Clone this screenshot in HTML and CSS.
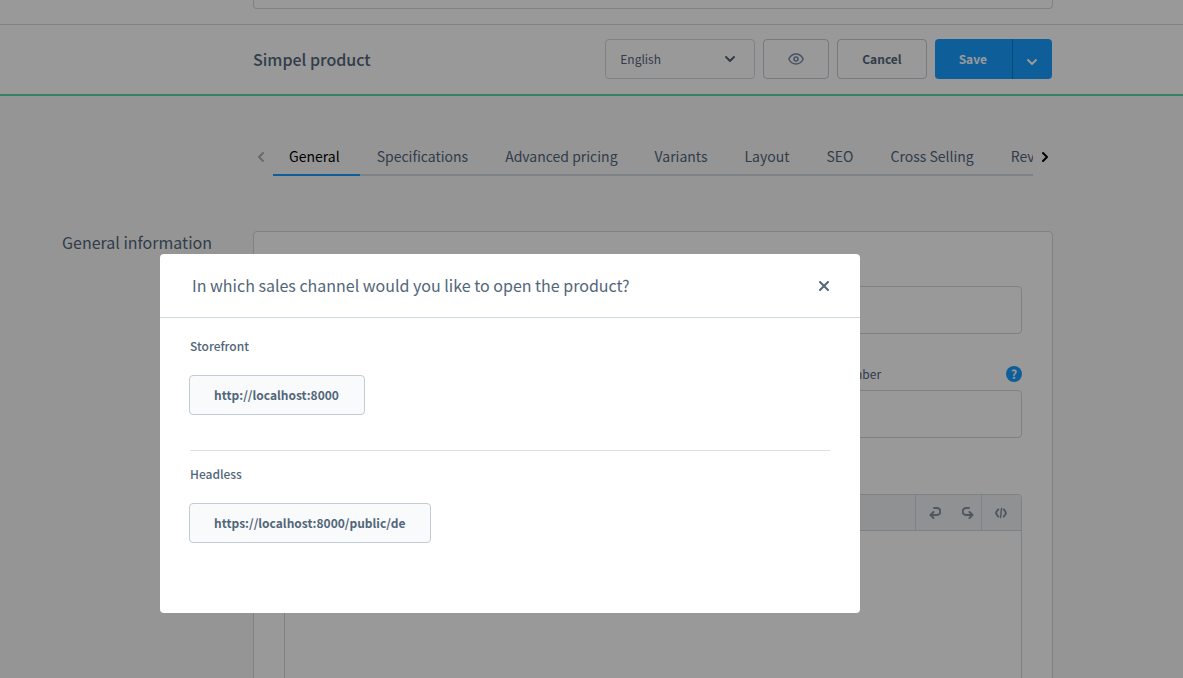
FILE: index.html
```html
<!DOCTYPE html>
<html lang="en">
<head>
<meta charset="utf-8">
<title>Simpel product</title>
<link rel="stylesheet" href="styles.css">
</head>
<body>
<div class="page">
  <div class="search-bar"><div class="search-box"></div></div>
  <header class="toolbar">
    <h1 class="toolbar-title">Simpel product</h1>
    <div class="actions">
      <div class="select-wrap">
        <select class="language" aria-label="Language"><option>English</option></select>
        <svg class="select-arrow" width="12" height="8" viewBox="0 0 12 8"><path d="M2 2l4 4 4-4"/></svg>
      </div>
      <button class="button button-icon" type="button" aria-label="Preview">
        <svg class="eye" width="16" height="12" viewBox="0 0 16 12"><path d="M.8 6C2.400 2.800 5 1 8 1s5.600 1.800 7.200 5C13.600 9.200 11 11 8 11S2.400 9.200.8 6z"/><circle cx="8" cy="6" r="2"/></svg>
      </button>
      <button class="button" type="button">Cancel</button>
      <div class="save-group">
        <button class="save" type="button">Save</button>
        <button class="save-more" type="button" aria-label="More save options"><svg width="12" height="8" viewBox="0 0 12 8"><path d="M2 2l4 4 4-4"/></svg></button>
      </div>
    </div>
  </header>
  <main class="content">
    <div class="tab-bar">
      <button class="tab-arrow tab-arrow-off" type="button" aria-label="Previous tabs"><svg width="8" height="12" viewBox="0 0 8 12"><path d="M6 2L2 6l4 4"/></svg></button>
      <nav class="tabs">
        <a class="tab tab-active" href="#general">General</a>
        <a class="tab" href="#specifications">Specifications</a>
        <a class="tab" href="#pricing">Advanced pricing</a>
        <a class="tab" href="#variants">Variants</a>
        <a class="tab" href="#layout">Layout</a>
        <a class="tab" href="#seo">SEO</a>
        <a class="tab" href="#cross-selling">Cross Selling</a>
        <a class="tab" href="#reviews">Reviews</a>
      </nav>
      <button class="tab-arrow tab-arrow-next" type="button" aria-label="Next tabs"><svg width="8" height="12" viewBox="0 0 8 12"><path d="M2 2l4 4-4 4"/></svg></button>
    </div>
    <section class="section">
      <h2 class="section-title">General information</h2>
      <div class="card">
        <input class="input" type="text" aria-label="Name">
        <div class="field-row">
          <input class="input" type="text" aria-label="Manufacturer">
          <div class="field">
            <div class="label-row">
              <label class="label" for="number">Product number</label>
              <button class="help" type="button" aria-label="Help">?</button>
            </div>
            <input class="input" id="number" type="text">
          </div>
        </div>
        <div class="editor">
          <div class="editor-bar">
            <div class="editor-group">
              <button class="editor-button" type="button" aria-label="Undo"><svg width="12" height="12" viewBox="0 0 12 12"><path d="M5 1h2.800a3.200 3.200 0 0 1 0 7H1.800M4.500 5L1.500 8l3 3"/></svg></button>
              <button class="editor-button" type="button" aria-label="Redo"><svg width="12" height="12" viewBox="0 0 12 12"><path d="M7 1H4.200a3.200 3.200 0 0 0 0 7h6M7.500 5l3 3-3 3"/></svg></button>
            </div>
            <div class="editor-group editor-group-code">
              <button class="editor-button" type="button" aria-label="Source code"><svg width="12" height="12" viewBox="0 0 12 12"><path d="M3.200 2.500Q1.800 3.800 1 6q.8 2.200 2.200 3.500M8.800 2.500Q10.200 3.800 11 6q-.8 2.200-2.200 3.500"/><path class="slash" d="M6.500 1.500l-1 9"/></svg></button>
            </div>
          </div>
          <textarea class="editor-text" aria-label="Description"></textarea>
        </div>
      </div>
    </section>
  </main>
</div>
<div class="backdrop">
  <div class="modal" role="dialog" aria-modal="true" aria-labelledby="modal-title">
    <header class="modal-head">
      <h2 class="modal-title" id="modal-title">In which sales channel would you like to open the product?</h2>
      <button class="close" type="button" aria-label="Close"><svg width="12" height="12" viewBox="0 0 12 12"><path d="M2 2l8 8M10 2l-8 8"/></svg></button>
    </header>
    <div class="modal-body">
      <section class="channel">
        <h3 class="channel-title">Storefront</h3>
        <button class="button button-channel" type="button">http://localhost:8000</button>
      </section>
      <section class="channel">
        <h3 class="channel-title">Headless</h3>
        <button class="button button-channel" type="button">https://localhost:8000/public/de</button>
      </section>
    </div>
  </div>
</div>
</body>
</html>
```

FILE: styles.css
```css
* { box-sizing: border-box; }
body {
  margin: 0;
  height: 100vh;
  overflow: hidden;
  background: #f9f9f9;
  color: #52667a;
  font: 400 12px/20px "Noto Sans CJK SC", "Noto Sans", sans-serif;
}
button, input, select, textarea { font: inherit; color: inherit; margin: 0; }
button { display: flex; align-items: center; justify-content: center; }
h1, h2, h3 { margin: 0; }
svg { flex: none; fill: none; stroke: currentColor; stroke-width: 2; stroke-linecap: round; stroke-linejoin: round; }
.page { height: 100vh; overflow: hidden; }

.search-bar { padding: 0 130px 15px 253px; background: #fff; border-bottom: 1px solid #d1d9e0; }
.search-box { height: 9px; border: 1px solid #d1d9e0; border-top: 0; border-radius: 0 0 4px 4px; }
.toolbar {
  display: flex;
  align-items: center;
  justify-content: space-between;
  padding: 14px 131px 15px 253px;
  background: #fff;
  border-bottom: 2px solid #57d9a3;
}
.toolbar-title { font-size: 16px; font-weight: 500; line-height: 24px; }
.actions { display: flex; gap: 8px; }
.select-wrap { position: relative; width: 150px; }
.language {
  appearance: none;
  width: 100%;
  height: 40px;
  padding: 0 14px;
  border: 1px solid #d1d9e0;
  border-radius: 4px;
  background: #fff;
}
.select-arrow { position: absolute; right: 19px; top: 16px; pointer-events: none; }
.button {
  height: 40px;
  padding: 0 24px;
  border: 1px solid #c2ccd6;
  border-radius: 4px;
  background: #fff;
  font-weight: 700;
}
.button-icon { width: 66px; }
.eye { stroke: #758ca3; stroke-width: 1.500; }
.save-group { display: flex; color: #fff; }
.save, .save-more { height: 40px; border: 0; background: #189eff; }
.save { padding: 0 25px 0 24px; border-radius: 4px 0 0 4px; font-weight: 700; }
.save-more { width: 40px; padding: 5px 2px 0 0; border-left: 1px solid #0b7cce; border-radius: 0 4px 4px 0; }

.content { padding: 41px 130px 0 62px; }
.tab-bar { display: flex; padding-left: 191px; }
.tab-arrow { width: 20px; height: 39px; padding: 0; border: 0; background: none; color: #000; }
.tab-arrow-off { padding-right: 4px; color: #b0b0b0; }
.tab-arrow-next { padding-left: 4px; }
.tabs { display: flex; flex: 1; gap: 1px; min-width: 0; overflow: hidden; box-shadow: inset 0 -2px #d1d9e0; }
.tab { flex: none; height: 39px; padding: 8px 20px 0 16px; font-size: 14px; line-height: 22px; color: inherit; text-decoration: none; }
.tab-active { color: #000; border-bottom: 2px solid #189eff; }

.section { display: grid; grid-template-columns: 191px minmax(0, 1fr); margin-top: 55px; }
.section-title { font-size: 16px; font-weight: 400; line-height: 22px; }
.card {
  display: flex;
  flex-direction: column;
  padding: 54px 30px 30px;
  background: #fff;
  border: 1px solid #d1d9e0;
  border-radius: 4px;
}
.label { display: block; height: 30px; padding-top: 4px; }
.label-row { display: flex; justify-content: space-between; }
.field-row { display: grid; grid-template-columns: 2fr 1fr; align-items: end; gap: 40px; margin: 26px 0 56px; }
.input { display: block; width: 100%; height: 48px; padding: 0 16px; border: 1px solid #d1d9e0; border-radius: 4px; background: #fff; }
.help { width: 16px; height: 16px; margin-top: 6px; padding: 0; border: 0; border-radius: 50%; background: #189eff; color: #fff; font-weight: 700; line-height: 16px; }
.editor { border: 1px solid #d1d9e0; border-radius: 4px; overflow: hidden; }
.editor-bar { display: flex; justify-content: flex-end; height: 36px; background: #f0f2f5; border-bottom: 1px solid #d1d9e0; color: #8292a3; }
.editor-group { display: flex; gap: 6px; padding-left: 5px; border-left: 1px solid #d1d9e0; }
.editor-button { width: 27px; padding: 0; border: 0; background: none; }
.editor-group-code { padding: 0 7px 0 5px; }
.slash { stroke-width: 1.500; }
.editor-text { display: block; width: 100%; height: 300px; padding: 16px; border: 0; background: #fff; resize: none; }

.backdrop { position: fixed; inset: 0; padding: 254px 323px 0 160px; background: rgba(0, 0, 0, .4); }
.modal { min-height: 359px; background: #fff; border-radius: 4px; }
.modal-head { display: flex; align-items: center; justify-content: space-between; height: 64px; padding: 0 30px 0 32px; border-bottom: 1px solid #d1d9e0; }
.modal-title { padding-bottom: 2px; font-size: 16px; font-weight: 400; line-height: 24px; }
.close { width: 12px; height: 12px; padding: 0; border: 0; background: none; }
.modal-body { padding: 0 30px; }
.channel { padding: 18px 0 35px; }
.channel + .channel { padding-top: 13px; border-top: 1px solid #dcdfe3; }
.channel-title { margin-bottom: 19px; font-size: 12px; font-weight: 500; line-height: 20px; }
.button-channel { margin-left: -1px; padding: 0 25px 0 24px; background: #f9fafb; }
```
